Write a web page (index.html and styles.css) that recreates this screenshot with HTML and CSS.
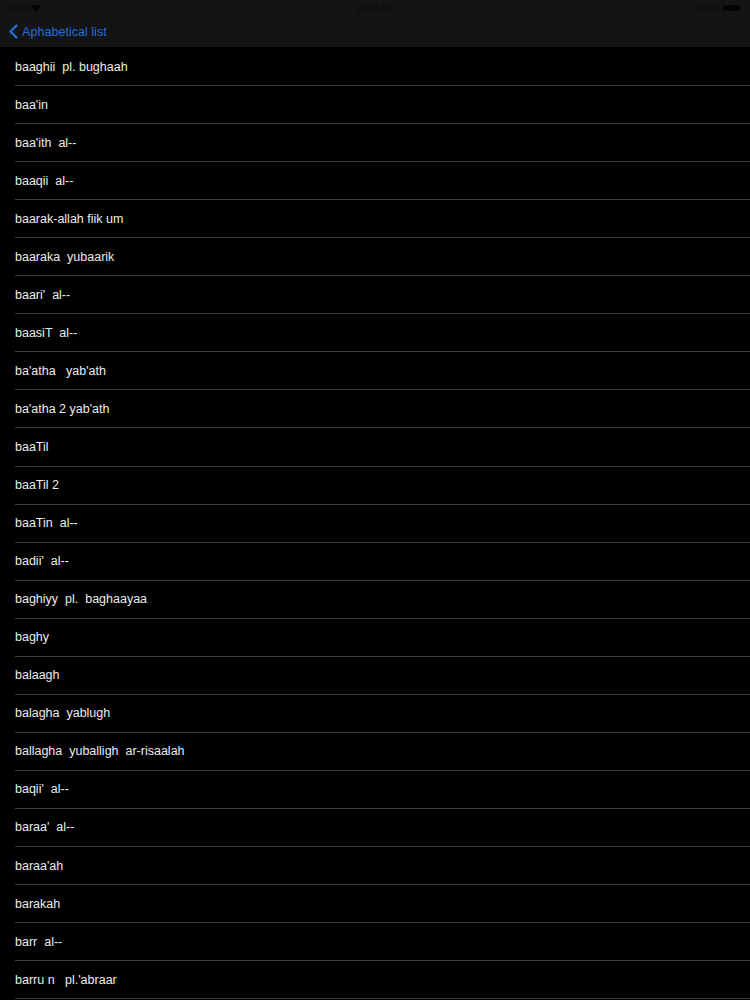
FILE: index.html
```html
<!DOCTYPE html>
<html>
<head>
<meta charset="utf-8">
<link rel="stylesheet" href="styles.css">
</head>
<body>
<header class="top">
  <div class="status">
    <span class="st-left">iPad <svg class="wifi" width="10" height="8" viewBox="0 0 10 8"><path d="M5 8 L0 2.5 A7 7 0 0 1 10 2.5 Z" fill="#050505"/></svg></span>
    <span class="st-mid">10:53 AM</span>
    <span class="st-right">100% <span class="batt"></span></span>
  </div>
  <nav class="nav">
    <svg class="chev" width="11" height="15" viewBox="0 0 11 15"><path d="M8.5 1.5 L2.5 7.5 L8.5 13.5" fill="none" stroke="#1f6fd6" stroke-width="2.4" stroke-linecap="round" stroke-linejoin="round"/></svg>
    <span class="back">Aphabetical list</span>
  </nav>
</header>
<ul class="list">
  <li class="row">baaghii  pl. bughaah</li>
  <li class="row">baa'in</li>
  <li class="row">baa'ith  al--</li>
  <li class="row">baaqii  al--</li>
  <li class="row">baarak-allah fiik um</li>
  <li class="row">baaraka  yubaarik</li>
  <li class="row">baari'  al--</li>
  <li class="row">baasiT  al--</li>
  <li class="row">ba'atha   yab'ath</li>
  <li class="row">ba'atha 2 yab'ath</li>
  <li class="row">baaTil</li>
  <li class="row">baaTil 2</li>
  <li class="row">baaTin  al--</li>
  <li class="row">badii'  al--</li>
  <li class="row">baghiyy  pl.  baghaayaa</li>
  <li class="row">baghy</li>
  <li class="row">balaagh</li>
  <li class="row">balagha  yablugh</li>
  <li class="row">ballagha  yuballigh  ar-risaalah</li>
  <li class="row">baqii'  al--</li>
  <li class="row">baraa'  al--</li>
  <li class="row">baraa'ah</li>
  <li class="row">barakah</li>
  <li class="row">barr  al--</li>
  <li class="row">barru n   pl.'abraar</li>
</ul>
</body>
</html>
```
FILE: styles.css
```css
html, body {
  margin: 0;
  padding: 0;
  background: #000;
}
body {
  font-family: "Liberation Sans", Arial, sans-serif;
  width: 750px;
  height: 1000px;
  overflow: hidden;
}
.top {
  background: #141316;
  height: 47px;
  display: flex;
  flex-direction: column;
}
.status {
  height: 16px;
  display: flex;
  align-items: center;
  justify-content: space-between;
  padding: 0 10px;
  font-size: 9px;
  color: #0a0a0b;
  position: relative;
}
.st-left, .st-right {
  display: flex;
  align-items: center;
  gap: 3px;
}
.st-mid {
  position: absolute;
  left: 50%;
  transform: translateX(-50%);
}
.batt {
  display: inline-block;
  width: 17px;
  height: 6px;
  background: #050505;
  border-radius: 1px;
}
.nav {
  flex: 1;
  display: flex;
  align-items: center;
  padding-left: 8px;
  padding-top: 1px;
  padding-bottom: 1px;
  gap: 3px;
}
.back {
  color: #1f6fd6;
  font-size: 12.6px;
}
.list {
  list-style: none;
  margin: 0;
  padding: 1px 0 0 15px;
}
.row {
  height: 37.05px;
  border-bottom: 1px solid #3c3c3f;
  display: flex;
  align-items: center;
  color: #ececec;
  font-size: 12.5px;
  white-space: pre;
}
```
